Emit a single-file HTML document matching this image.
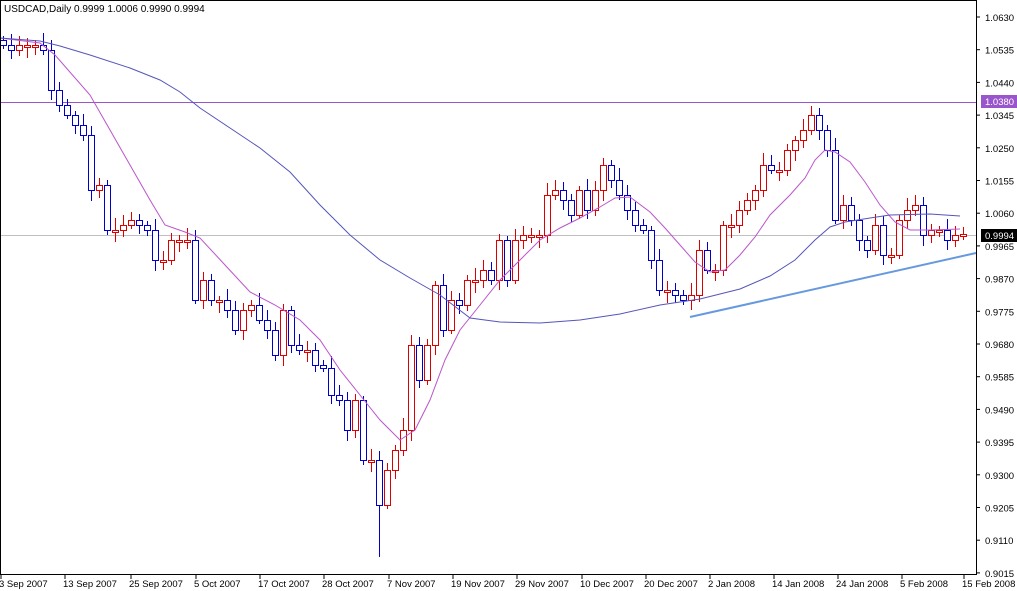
<!DOCTYPE html>
<html><head><meta charset="utf-8"><style>
html,body{margin:0;padding:0;background:#fff;width:1017px;height:591px;overflow:hidden}
svg{display:block}
text{font-family:"Liberation Sans",sans-serif;font-size:9.5px;fill:#000}
</style></head><body>
<svg id="c" width="1017" height="591" xmlns="http://www.w3.org/2000/svg">
<rect x="0" y="0" width="1017" height="591" fill="#fff"/>
<line x1="0" y1="102.5" x2="976" y2="102.5" stroke="#9955cc" stroke-width="1"/>
<line x1="0" y1="235.5" x2="976" y2="235.5" stroke="#c0c0c0" stroke-width="1"/>
<g id="cd"></g>
<polyline fill="none" stroke="#bb55cc" stroke-width="1" points="0,38 40,43 55,55 90,95 110,130 130,165 150,200 165,225 185,232 200,238 225,265 250,292 275,305 300,320 320,340 340,370 360,395 380,420 400,440 415,430 430,400 445,360 460,330 480,305 500,280 520,260 540,240 560,228 580,218 600,207 615,198 630,197 650,212 665,228 680,245 695,262 710,272 725,270 740,255 755,237 770,215 790,195 805,178 815,160 825,150 835,152 850,162 865,182 880,205 895,222 910,230 930,230 960,229"/>
<polyline fill="none" stroke="#5555bb" stroke-width="1" points="0,38 40,41 60,46 90,55 130,68 160,80 180,92 200,108 230,128 260,148 290,172 320,205 350,235 380,260 410,278 440,295 470,318 500,322 540,323 580,320 620,314 660,305 700,299 740,289 770,276 795,260 815,240 830,227 845,222 870,218 890,215 930,214 960,216"/>
<line x1="690" y1="317" x2="976" y2="253" stroke="#6699dd" stroke-width="2"/>
<rect x="0.5" y="0.5" width="976" height="574" fill="none" stroke="#000"/>
<text x="4" y="12" style="font-size:10px">USDCAD,Daily  0.9999 1.0006 0.9990 0.9994</text>
<g id="ax"></g>
</svg>
<script>
var ys=[45,50,45,45,45,50,90,105,115,125,135,190,185,230,230,225,220,225,230,260,260,240,240,240,300,280,300,300,310,330,310,305,320,330,355,310,345,350,350,365,368,395,400,430,400,460,460,505,470,450,430,345,380,345,285,330,300,305,280,280,270,280,240,280,240,235,235,235,195,190,200,215,190,210,190,165,180,195,210,225,230,260,290,290,295,300,295,250,270,270,225,225,210,200,190,165,170,170,150,140,130,115,130,150,220,205,220,240,250,225,255,255,220,210,205,235,230,230,240,235,234];
var g='',prev=40;
for(var i=0;i<ys.length;i++){var x=3+i*8,o=prev,c=ys[i];var t=Math.min(o,c),b=Math.max(o,c);if(b-t<2){b=t+2;}
var col=c>o?'#0000cc':'#dd0000';var wt=t-4-((i*7)%9),wb=b+4+((i*5)%8);
if(i==47)wb=557;
g+='<line x1="'+(x+0.5)+'" y1="'+wt+'" x2="'+(x+0.5)+'" y2="'+wb+'" stroke="'+col+'"/>';
g+='<rect x="'+(x-2.5)+'" y="'+(t+0.5)+'" width="6" height="'+(b-t)+'" fill="#fff" stroke="'+col+'"/>';prev=c;}
document.getElementById('cd').innerHTML=g;
var a='';var labs=['1.0630','1.0535','1.0440','1.0345','1.0250','1.0155','1.0060','0.9965','0.9870','0.9775','0.9680','0.9585','0.9490','0.9395','0.9300','0.9205','0.9110','0.9015'];
for(var j=0;j<labs.length;j++){var y=17+j*32.7;a+='<line x1="976" y1="'+y+'" x2="980" y2="'+y+'" stroke="#000"/><text x="985" y="'+(y+4)+'">'+labs[j]+'</text>';}
a+='<rect x="981" y="95" width="36" height="13" fill="#9955cc"/><text x="985" y="105" style="fill:#fff">1.0380</text>';
a+='<rect x="981" y="229" width="36" height="13" fill="#000"/><text x="985" y="239" style="fill:#fff">0.9994</text>';
var d=[[0,'3 Sep 2007'],[64,'13 Sep 2007'],[130,'25 Sep 2007'],[195,'5 Oct 2007'],[259,'17 Oct 2007'],[323,'28 Oct 2007'],[388,'7 Nov 2007'],[452,'19 Nov 2007'],[516,'29 Nov 2007'],[581,'10 Dec 2007'],[645,'20 Dec 2007'],[709,'2 Jan 2008'],[773,'14 Jan 2008'],[837,'24 Jan 2008'],[901,'5 Feb 2008'],[963,'15 Feb 2008']];
for(var k=0;k<d.length;k++){a+='<line x1="'+(d[k][0]+1)+'" y1="575" x2="'+(d[k][0]+1)+'" y2="579" stroke="#000"/><text x="'+(d[k][0]-1)+'" y="587">'+d[k][1]+'</text>';}
document.getElementById('ax').innerHTML=a;
</script>
</body></html>
